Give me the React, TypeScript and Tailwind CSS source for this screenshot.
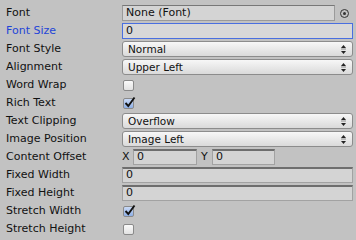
import React from "react";

const font = { fontFamily: '"DejaVu Sans", "Noto Sans", sans-serif' };

const Arrows = () => (
    <svg width="5" height="9" viewBox="0 0 5 9" className="absolute right-[6px] top-[3px]">
        <path d="M2.5 0 L5 3 H0 Z" fill="#222" />
        <path d="M0 4 H5" stroke="#777" strokeWidth="0.8" />
        <path d="M2.5 9 L5 6 H0 Z" fill="#222" />
    </svg>
);

const Dropdown = ({ value }: { value: string }) => (
    <div className="relative flex-1 h-4 rounded-[3px] border border-[#8c8c8c] bg-gradient-to-b from-[#f7f7f7] to-[#dadada] pl-[5px] text-[10.5px] leading-[14px] text-[#111]">
        {value}
        <Arrows />
    </div>
);

const TextField = ({ value, focused, className = "flex-1" }: { value: string; focused?: boolean; className?: string }) => (
    <div
        className={
            focused
                ? `${className} h-4 border border-[#4a6fe0] bg-[#d8d8d8] pl-[3px] text-[11px] leading-[14px] text-[#111]`
                : `${className} h-4 border border-[#a2a2a2] border-t-[#6e6e6e] border-t-2 bg-[#d4d4d4] pl-[3px] text-[11px] leading-[12px] text-[#111]`
        }
    >
        {value}
    </div>
);

const Check = ({ checked }: { checked?: boolean }) => (
    <div
        className={
            checked
                ? "relative ml-px w-[11px] h-[11px] rounded-[2px] border border-[#8a8a8a] bg-gradient-to-b from-[#c9d9f5] to-[#8fb0e6]"
                : "ml-px w-[11px] h-[11px] rounded-[2px] border border-[#8a8a8a] bg-gradient-to-b from-[#fafafa] to-[#e2e2e2]"
        }
    >
        {checked && (
            <svg width="12" height="12" viewBox="0 0 12 12" className="absolute left-[0px] top-[-3px]">
                <path d="M1.5 7 L4.3 10 L10.5 1.5" fill="none" stroke="#111" strokeWidth="1.9" />
            </svg>
        )}
    </div>
);

const Row = ({ label, blue, children }: { label: string; blue?: boolean; children: React.ReactNode }) => (
    <div className="flex h-4 items-center">
        <div className={blue ? "w-[122px] pl-[6px] text-[11px] text-[#1f45d8]" : "w-[122px] pl-[6px] text-[11px] text-[#111]"}>
            {label}
        </div>
        <div className="flex flex-1 items-center pr-[3px]">{children}</div>
    </div>
);

export default function App() {
    return (
        <div className="flex w-[356px] h-[240px] flex-col gap-[2px] bg-[#c2c2c2] pt-[5px]" style={font}>
            <Row label="Font">
                <div className="w-[213px] h-4 border border-[#9a9a9a] border-t-[#777] bg-[#d4d4d4] pl-[3px] text-[11px] leading-[14px] text-[#111]">
                    None (Font)
                </div>
                <div className="flex flex-1 justify-center">
                    <div className="flex w-[9px] h-[9px] items-center justify-center rounded-full border border-[#333]">
                        <div className="w-[3px] h-[3px] rounded-full bg-[#333]" />
                    </div>
                </div>
            </Row>
            <Row label="Font Size" blue>
                <TextField value="0" focused />
            </Row>
            <Row label="Font Style">
                <Dropdown value="Normal" />
            </Row>
            <Row label="Alignment">
                <Dropdown value="Upper Left" />
            </Row>
            <Row label="Word Wrap">
                <Check />
            </Row>
            <Row label="Rich Text">
                <Check checked />
            </Row>
            <Row label="Text Clipping">
                <Dropdown value="Overflow" />
            </Row>
            <Row label="Image Position">
                <Dropdown value="Image Left" />
            </Row>
            <Row label="Content Offset">
                <span className="w-[11px] text-[11px] text-[#111]">X</span>
                <TextField value="0" className="w-[64px]" />
                <span className="w-[15px] pl-[4px] text-[11px] text-[#111]">Y</span>
                <TextField value="0" className="w-[63px]" />
            </Row>
            <Row label="Fixed Width">
                <TextField value="0" />
            </Row>
            <Row label="Fixed Height">
                <TextField value="0" />
            </Row>
            <Row label="Stretch Width">
                <Check checked />
            </Row>
            <Row label="Stretch Height">
                <Check />
            </Row>
        </div>
    );
}
